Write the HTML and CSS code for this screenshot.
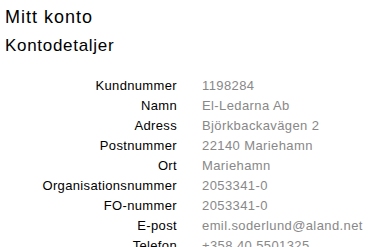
FILE: index.html
```html
<!DOCTYPE html>
<html>
<head>
  <meta charset="utf-8">
  <title>Mitt konto</title>
  <link rel="stylesheet" href="styles.css">
</head>
<body>

<h1>Mitt konto</h1>
<h2>Kontodetaljer</h2>

<dl class="details">
  <dt>Kundnummer</dt><dd>1198284</dd>
  <dt>Namn</dt><dd>El-Ledarna Ab</dd>
  <dt>Adress</dt><dd>Björkbackavägen 2</dd>
  <dt>Postnummer</dt><dd>22140 Mariehamn</dd>
  <dt>Ort</dt><dd>Mariehamn</dd>
  <dt>Organisationsnummer</dt><dd>2053341-0</dd>
  <dt>FO-nummer</dt><dd>2053341-0</dd>
  <dt>E-post</dt><dd>emil.soderlund@aland.net</dd>
  <dt>Telefon</dt><dd>+358 40 5501325</dd>
</dl>

</body>
</html>
```

FILE: styles.css
```css
body {
  margin: 0;
  padding: 0 5px;
  font-family: "Liberation Sans", Arial, sans-serif;
  color: #000;
  background: #fff;
}
h1 {
  font-size: 18px;
  font-weight: normal;
  line-height: 24px;
  letter-spacing: 1px;
  margin: 5px 0 0;
}
h2 {
  font-size: 17px;
  font-weight: normal;
  line-height: 24px;
  letter-spacing: 0.7px;
  margin: 5px 0 0;
}
.details {
  display: grid;
  grid-template-columns: 172px auto;
  column-gap: 25px;
  margin: 18px 0 0;
  font-size: 13px;
  line-height: 20px;
}
.details dt {
  text-align: right;
  letter-spacing: 0.35px;
  color: #000;
}
.details dd {
  margin: 0;
  letter-spacing: 0.4px;
  color: #888;
}
```
